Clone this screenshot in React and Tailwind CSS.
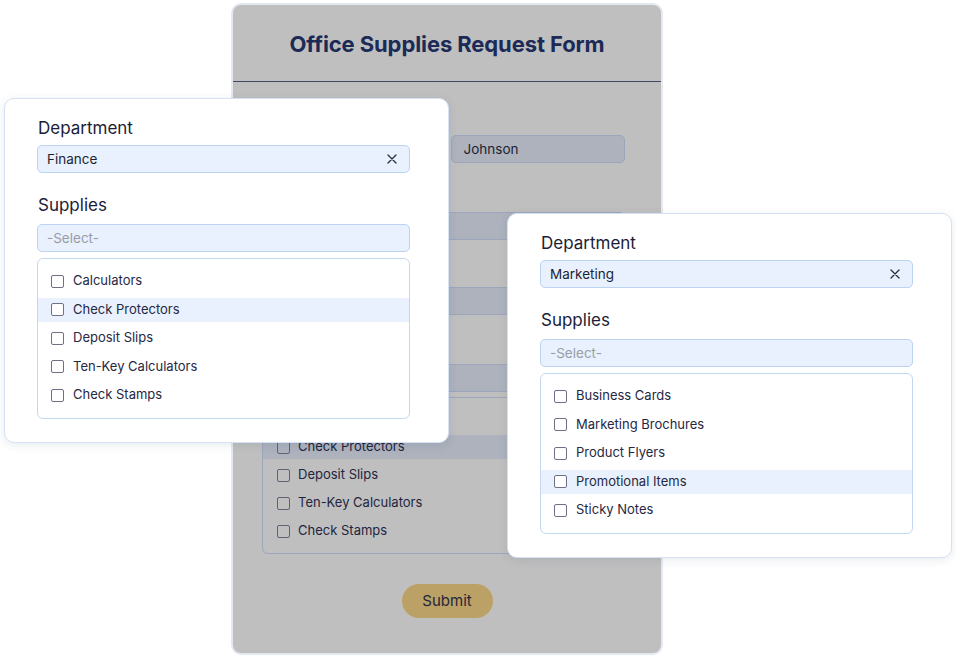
import React from 'react';

const financeItems = ['Calculators', 'Check Protectors', 'Deposit Slips', 'Ten-Key Calculators', 'Check Stamps'];
const marketingItems = ['Business Cards', 'Marketing Brochures', 'Product Flyers', 'Promotional Items', 'Sticky Notes'];

const CloseIcon = () => (
  <svg width="10" height="10" viewBox="0 0 10 10" className="shrink-0">
    <path d="M1 1L9 9M9 1L1 9" stroke="#2a2c40" strokeWidth="1.3" strokeLinecap="round" />
  </svg>
);

const Checkbox = ({ dim }) => (
  <span
    className={`w-[13px] h-[13px] rounded-[2px] border-[1.5px] shrink-0 ${
      dim ? 'border-[#5f6274] bg-transparent' : 'border-[#6d7086] bg-white'
    }`}
  />
);

const PopCard = ({ dept, items, active, className }) => (
  <div
    className={`absolute w-[445px] bg-white rounded-[10px] border border-[#d5e2f4] shadow-[0_2px_10px_rgba(30,50,90,0.10)] pl-[32px] pr-[38px] pt-[17px] pb-[23px] ${className}`}
  >
    <div className="pl-[1px] text-[17px] leading-[24px] text-[#1b1d38]">Department</div>
    <div className="mt-[5px] h-[28px] rounded-[5px] bg-[#e8f1fd] border border-[#bcd3f3] flex items-center justify-between pl-[9px] pr-[12px]">
      <span className="text-[13.5px] text-[#1d1f33]">{dept}</span>
      <CloseIcon />
    </div>
    <div className="pl-[1px] mt-[20px] text-[17px] leading-[24px] text-[#1b1d38]">Supplies</div>
    <div className="mt-[7px] h-[28px] rounded-[5px] bg-[#e8f1fd] border border-[#bcd3f3] flex items-center pl-[9px]">
      <span className="text-[13.5px] text-[#9a9ca8]">-Select-</span>
    </div>
    <div className="mt-[6px] rounded-[6px] border border-[#c3d7f3] pt-[10px] pb-[11px] flex flex-col gap-[4.5px]">
      {items.map((item) => (
        <div
          key={item}
          className={`h-[24px] flex items-center gap-[9px] pl-[13px] ${item === active ? 'bg-[#e8f1fd]' : ''}`}
        >
          <Checkbox />
          <span className="text-[13px] text-[#262843]">{item}</span>
        </div>
      ))}
    </div>
  </div>
);

const BgField = ({ className = '', children }) => (
  <div
    className={`h-[28px] rounded-[5px] bg-[#adb2bd] border border-[#9ba6bb] flex items-center pl-[12px] ${className}`}
  >
    {children}
  </div>
);

const BgLabel = ({ children, className = '' }) => (
  <div className={`text-[16px] leading-[24px] text-[#1b1d38] ${className}`}>{children}</div>
);

export default function App() {
  return (
    <div className="relative w-[956px] h-[656px] bg-white overflow-hidden font-['Inter',sans-serif]">
      {/* background form */}
      <div className="ml-[231px] mt-[3px] w-[432px] h-[652px] rounded-[10px] bg-[#bfbfbf] border-2 border-[#e4e9f1] flex flex-col">
        <div className="h-[77px] shrink-0 pt-[2px] flex items-center justify-center border-b border-[#3f4865]">
          <h1 className="text-[22px] font-bold text-[#1c2a57] tracking-[-0.1px]">Office Supplies Request Form</h1>
        </div>
        <div className="pl-[29px] pr-[36px] pt-[24px] flex flex-col">
          <BgLabel>Name</BgLabel>
          <div className="mt-[5px] flex gap-[14px]">
            <BgField className="flex-1">
              <span className="text-[13.5px] text-[#1d1f33]">Emily</span>
            </BgField>
            <BgField className="flex-1">
              <span className="text-[13.5px] text-[#1d1f33]">Johnson</span>
            </BgField>
          </div>
          <BgLabel className="mt-[20px]">Email</BgLabel>
          <BgField className="mt-[5px]" />
          <BgLabel className="mt-[18px]">Department</BgLabel>
          <BgField className="mt-[5px]" />
          <BgLabel className="mt-[20px]">Supplies</BgLabel>
          <BgField className="mt-[5px]" />
          <div className="mt-[5px] rounded-[6px] border border-[#9ba6bb] pt-[9px] pb-[10px] flex flex-col gap-[4px]">
            {financeItems.map((item) => (
              <div
                key={item}
                className={`h-[24px] flex items-center gap-[8px] pl-[14px] ${
                  item === 'Check Protectors' ? 'bg-[#adb2bd]' : ''
                }`}
              >
                <Checkbox dim />
                <span className="text-[13px] text-[#23253e]">{item}</span>
              </div>
            ))}
          </div>
          <div className="mt-[30px] pl-[7px] flex justify-center">
            <button className="w-[91px] h-[34px] rounded-full bg-[#bba165] text-[15px] text-[#25263a]">
              Submit
            </button>
          </div>
        </div>
      </div>

      <PopCard dept="Finance" items={financeItems} active="Check Protectors" className="left-[4px] top-[98px]" />
      <PopCard dept="Marketing" items={marketingItems} active="Promotional Items" className="left-[507px] top-[213px]" />
    </div>
  );
}
